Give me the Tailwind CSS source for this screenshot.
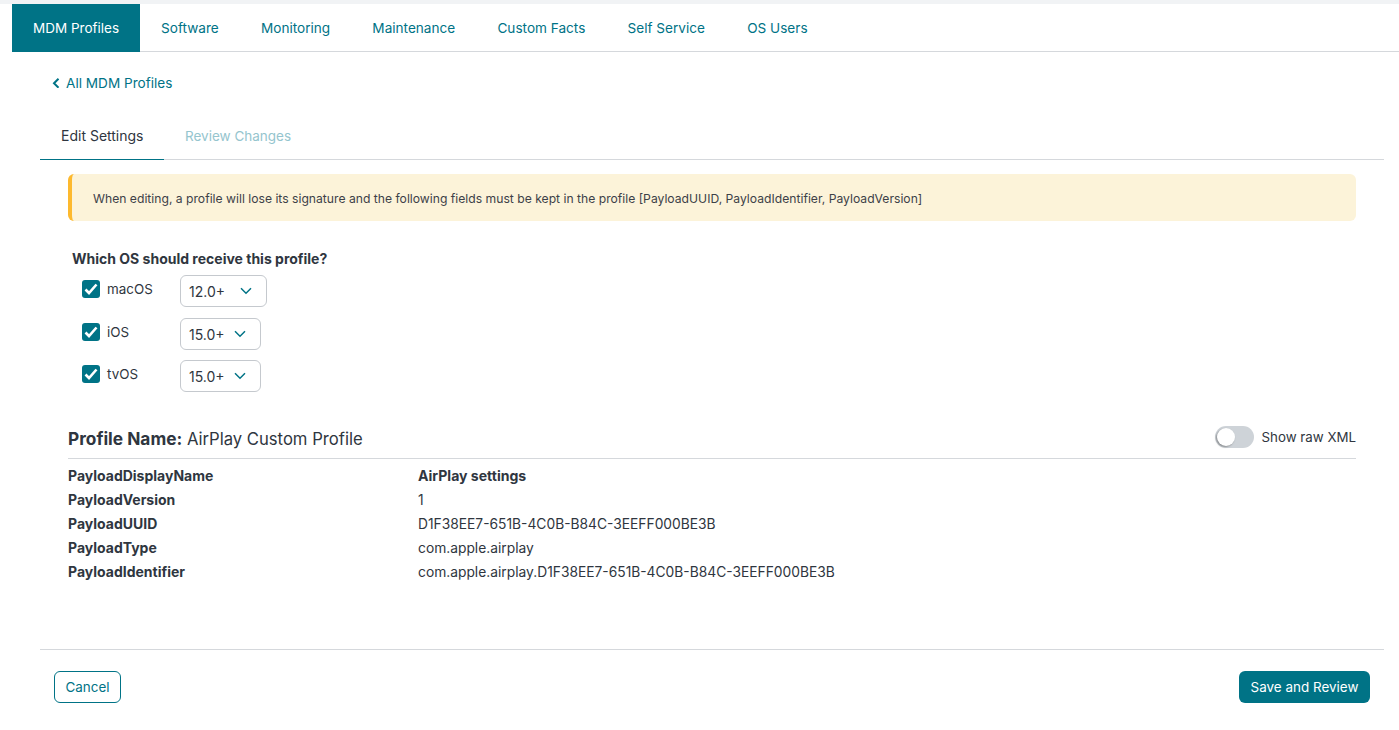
<!DOCTYPE html>
<html><head><meta charset="utf-8"><script src="https://cdn.jsdelivr.net/npm/@tailwindcss/browser@4"></script></head>
<body class="bg-white font-['Inter',sans-serif] text-sm text-[#2f3640] h-[730px] overflow-hidden">
<div class="h-1 bg-[#f1f3f5]"></div>
<nav class="ml-3 flex h-12 border-b border-[#d5d8dc] text-[#007386] text-[13.6px] whitespace-nowrap">
  <a class="flex items-center pl-[21px] pt-[1px] w-[128px] h-12 bg-[#007386] text-white text-[13.5px]">MDM Profiles</a>
  <a class="flex items-center px-[21.1px] pt-[2px] h-[47px]">Software</a>
  <a class="flex items-center px-[21.1px] pt-[2px] h-[47px]">Monitoring</a>
  <a class="flex items-center px-[21.1px] pt-[2px] h-[47px]">Maintenance</a>
  <a class="flex items-center px-[21.1px] pt-[2px] h-[47px]">Custom Facts</a>
  <a class="flex items-center px-[21.1px] pt-[2px] h-[47px]">Self Service</a>
  <a class="flex items-center px-[21.1px] pt-[2px] h-[47px]">OS Users</a>
</nav>
<div class="pl-[52px] pt-[22px] h-[60px] flex items-start gap-[6px] text-[#007386] leading-[18px] text-[13.6px]">
  <svg class="mt-[4px]" width="8" height="10" viewBox="0 0 8 10" fill="none" stroke="#007386" stroke-width="2"><path d="M6.5 0.7 L2 5.2 L6.5 9.7"/></svg>
  <span>All MDM Profiles</span>
</div>
<div class="mr-[15px] ml-10 flex h-[48px] border-b border-[#d5d8dc]">
  <div class="w-[124px] h-[48px] border-b border-[#007386] pl-[21px] pt-[4px] leading-[40px] -mb-px">Edit Settings</div>
  <div class="pl-[21px] pt-[4px] leading-[40px] text-[#95c5ce] text-[13.5px]">Review Changes</div>
</div>
<div class="mr-[43px] ml-[68px] mt-[14px]">
  <div class="h-[47px] flex items-center pl-[21px] pt-[2px] bg-[#fcf3d9] border-l-4 border-[#fdb92e] rounded-md text-[12.16px] text-[#3d4148]">When editing, a profile will lose its signature and the following fields must be kept in the profile [PayloadUUID, PayloadIdentifier, PayloadVersion]</div>
  <div class="ml-1 mt-[29px] font-bold leading-[18px] text-[14px]">Which OS should receive this profile?</div>
  <div class="ml-[14px] mt-[7px] flex flex-col">
    <div class="flex h-[32px] mb-[11px]">
      <span class="w-[18px] h-[18px] mt-[5px] rounded-[3px] bg-[#007386] flex items-center justify-center"><svg width="16" height="16" viewBox="0 0 16 16" fill="none" stroke="#fff" stroke-width="2.6"><path d="M2.5 8.5 L6 12 L13.5 3.5"/></svg></span>
      <span class="ml-[7px] w-[73px] mt-[5px] leading-[18px] text-[13.4px]">macOS</span>
      <div class="w-[87px] h-[32px] flex items-center justify-between pl-2 pr-[14px] border border-[#c5c9ce] rounded-md"><span class="mt-[1px]">12.0+</span><svg width="12" height="8" viewBox="0 0 12 8" fill="none" stroke="#007386" stroke-width="1.5"><path d="M1 1.2 L6 6.2 L11 1.2"/></svg></div>
    </div>
    <div class="flex h-[32px] mb-[10px]">
      <span class="w-[18px] h-[18px] mt-[5px] rounded-[3px] bg-[#007386] flex items-center justify-center"><svg width="16" height="16" viewBox="0 0 16 16" fill="none" stroke="#fff" stroke-width="2.6"><path d="M2.5 8.5 L6 12 L13.5 3.5"/></svg></span>
      <span class="ml-[7px] w-[73px] mt-[5px] leading-[18px] text-[13.4px]">iOS</span>
      <div class="w-[81px] h-[32px] flex items-center justify-between pl-2 pr-[14px] border border-[#c5c9ce] rounded-md"><span class="mt-[1px]">15.0+</span><svg width="12" height="8" viewBox="0 0 12 8" fill="none" stroke="#007386" stroke-width="1.5"><path d="M1 1.2 L6 6.2 L11 1.2"/></svg></div>
    </div>
    <div class="flex h-[32px]">
      <span class="w-[18px] h-[18px] mt-[5px] rounded-[3px] bg-[#007386] flex items-center justify-center"><svg width="16" height="16" viewBox="0 0 16 16" fill="none" stroke="#fff" stroke-width="2.6"><path d="M2.5 8.5 L6 12 L13.5 3.5"/></svg></span>
      <span class="ml-[7px] w-[73px] mt-[5px] leading-[18px] text-[13.4px]">tvOS</span>
      <div class="w-[81px] h-[32px] flex items-center justify-between pl-2 pr-[14px] border border-[#c5c9ce] rounded-md"><span class="mt-[1px]">15.0+</span><svg width="12" height="8" viewBox="0 0 12 8" fill="none" stroke="#007386" stroke-width="1.5"><path d="M1 1.2 L6 6.2 L11 1.2"/></svg></div>
    </div>
  </div>
  <div class="mt-[32px] h-[35px] flex items-start justify-between border-b border-[#d5d8dc]">
    <div class="text-[16.65px] leading-[24px] mt-[3px]"><span class="font-bold text-[17.3px]">Profile Name:</span> AirPlay Custom Profile</div>
    <div class="flex items-center gap-[7.5px] leading-[20px] mt-[2px] text-[13.3px]">
      <span class="w-[39px] h-[22px] rounded-full bg-[#ced3d8] relative block"><span class="absolute left-[2px] top-[2px] w-[18px] h-[18px] rounded-full bg-white shadow-[-1px_1px_2px_rgba(0,0,0,0.35)]"></span></span>
      <span>Show raw XML</span>
    </div>
  </div>
  <div class="mt-[6px] grid grid-cols-[350px_1fr] auto-rows-[24px] items-center text-[13.8px]">
    <div class="font-bold text-[14px] pb-[2px]">PayloadDisplayName</div><div class="font-bold text-[14.05px] pb-[2px]">AirPlay settings</div>
    <div class="font-bold text-[14px] pb-[2px]">PayloadVersion</div><div>1</div>
    <div class="font-bold text-[14px] pb-[2px]">PayloadUUID</div><div>D1F38EE7-651B-4C0B-B84C-3EEFF000BE3B</div>
    <div class="font-bold text-[14px] pb-[2px]">PayloadType</div><div>com.apple.airplay</div>
    <div class="font-bold text-[14px] pb-[2px]">PayloadIdentifier</div><div>com.apple.airplay.D1F38EE7-651B-4C0B-B84C-3EEFF000BE3B</div>
  </div>
</div>
<div class="ml-10 mr-[15px] mt-[64px] border-t border-[#d5d8dc] h-[81px] pt-[21px] pl-[14px] pr-[14px] flex justify-between items-start text-[13.45px]">
  <button class="w-[67px] h-[32px] pt-[1px] border border-[#007386] rounded-md text-[#007386]">Cancel</button>
  <button class="w-[131px] h-[32px] pt-[1px] bg-[#007386] rounded-md text-white">Save and Review</button>
</div>
</body></html>
